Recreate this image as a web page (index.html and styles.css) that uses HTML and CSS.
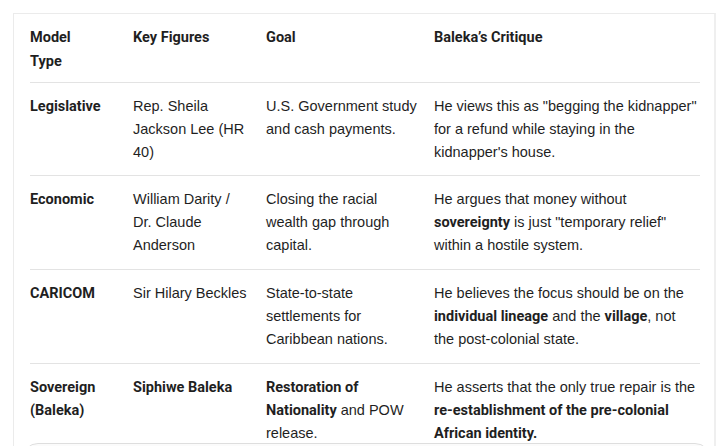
FILE: index.html
```html
<!DOCTYPE html>
<html>
<head>
<meta charset="utf-8">
<link rel="stylesheet" href="styles.css">
</head>
<body>
<div class="card">
  <table class="cmp">
    <colgroup>
      <col class="c1"><col class="c2"><col class="c3"><col class="c4">
    </colgroup>
    <thead>
      <tr>
        <th>Model Type</th>
        <th>Key Figures</th>
        <th>Goal</th>
        <th>Baleka’s Critique</th>
      </tr>
    </thead>
    <tbody>
      <tr class="first">
        <td><b>Legislative</b></td>
        <td>Rep. Sheila Jackson Lee (HR 40)</td>
        <td>U.S. Government study and cash payments.</td>
        <td>He views this as "begging the kidnapper" for a refund while staying in the kidnapper's house.</td>
      </tr>
      <tr>
        <td><b>Economic</b></td>
        <td>William Darity / Dr. Claude Anderson</td>
        <td>Closing the racial wealth gap through capital.</td>
        <td>He argues that money without <b>sovereignty</b> is just "temporary relief" within a hostile system.</td>
      </tr>
      <tr>
        <td><b>CARICOM</b></td>
        <td>Sir Hilary Beckles</td>
        <td>State-to-state settlements for Caribbean nations.</td>
        <td>He believes the focus should be on the <b>individual lineage</b> and the <b>village</b>, not the post-colonial state.</td>
      </tr>
      <tr>
        <td><b>Sovereign (Baleka)</b></td>
        <td><b>Siphiwe Baleka</b></td>
        <td><b>Restoration of Nationality</b> and POW release.</td>
        <td>He asserts that the only true repair is the <b>re-establishment of the pre-colonial African identity.</b></td>
      </tr>
    </tbody>
  </table>
</div>
<div class="dock"></div>
</body>
</html>
```

FILE: styles.css
```css
html, body {
  margin: 0;
  padding: 0;
  background: #ffffff;
  overflow: hidden;
}
body {
  font-family: "Liberation Sans", Arial, sans-serif;
  color: #1f1f1f;
  font-size: 14.5px;
}
.card {
  margin: 13px 3px 0 13px;
  border: 1px solid #ebebeb;
  border-right: 2px solid #efefef;
  border-bottom: none;
  padding: 0 15px 0 16px;
}
.cmp {
  border-collapse: collapse;
  table-layout: fixed;
  width: 670px;
}
.c1 { width: 103px; }
.c2 { width: 133px; }
.c3 { width: 168px; }
.c4 { width: 266px; }
.cmp th {
  text-align: left;
  font-family: Roboto, "Liberation Sans", sans-serif;
  font-weight: 700;
  line-height: 24px;
  padding: 12px 16px 8px 0;
  vertical-align: top;
}
.cmp td {
  line-height: 23px;
  padding: 12px 16px 12px 0;
  vertical-align: top;
}
.cmp tr.first td {
  padding-bottom: 11px;
}
.cmp th:first-child, .cmp td:first-child {
  padding-right: 28px;
}
.cmp th:last-child, .cmp td:last-child {
  padding-right: 2px;
}
.cmp thead tr, .cmp tbody tr {
  border-bottom: 1px solid #e3e3e3;
}
.cmp tbody tr:last-child {
  border-bottom: none;
}
.cmp b {
  font-family: Roboto, "Liberation Sans", sans-serif;
  font-weight: 700;
}
.dock {
  position: fixed;
  left: 22px;
  right: 8px;
  top: 443px;
  height: 24px;
  border: 1px solid #dedede;
  border-radius: 16px 16px 0 0;
  background: #fbfbfb;
}
```
